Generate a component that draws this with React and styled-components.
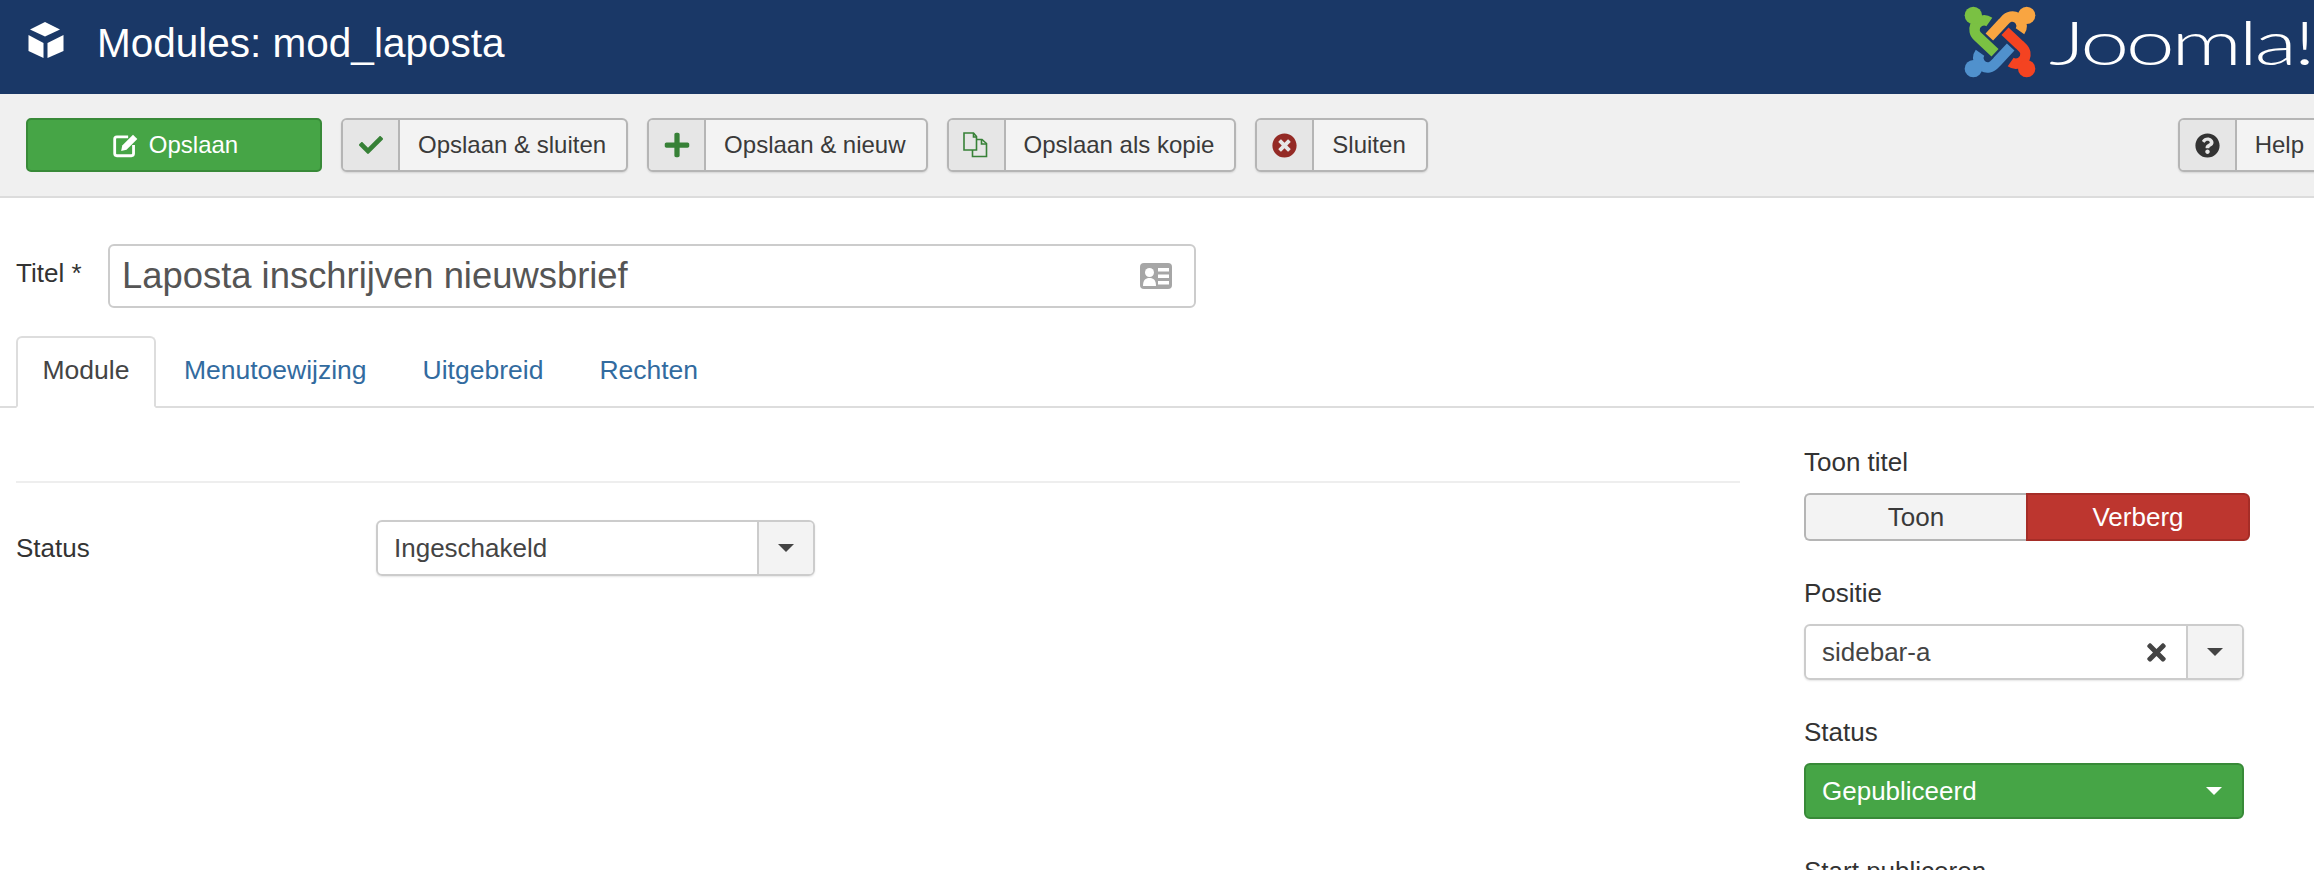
import React from 'react'
import styled, { createGlobalStyle } from 'styled-components'
import { FaCheck, FaPlus, FaTimesCircle, FaQuestionCircle, FaTimes } from 'react-icons/fa'

const App = () => (
    <Frame>
        <GlobalStyle />
        <Page>
            <Header>
                <CubeIcon />
                <HeaderTitle>Modules: mod_laposta</HeaderTitle>
                <JoomlaLogo />
            </Header>
            <Toolbar>
                <SaveButton><EditIcon />Opslaan</SaveButton>
                <ToolButton icon={<FaCheck />} color="#378137" size={24}>Opslaan &amp; sluiten</ToolButton>
                <ToolButton icon={<FaPlus />} color="#378137" size={28}>Opslaan &amp; nieuw</ToolButton>
                <ToolButton icon={<CopyIcon />}>Opslaan als kopie</ToolButton>
                <ToolButton icon={<FaTimesCircle />} color="#942a25" size={25}>Sluiten</ToolButton>
                <ToolButton right icon={<FaQuestionCircle />} color="#333" size={25}>Help</ToolButton>
            </Toolbar>
            <Content>
                <TitleRow>
                    <TitleLabel>Titel *</TitleLabel>
                    <TitleField>
                        Laposta inschrijven nieuwsbrief
                        <CardIcon />
                    </TitleField>
                </TitleRow>
                <Tabs>
                    <Tab active>Module</Tab>
                    <Tab>Menutoewijzing</Tab>
                    <Tab>Uitgebreid</Tab>
                    <Tab>Rechten</Tab>
                </Tabs>
                <Columns>
                    <MainColumn>
                        <Rule />
                        <StatusRow>
                            <StatusLabel>Status</StatusLabel>
                            <Select width={439}>
                                <SelectValue>Ingeschakeld</SelectValue>
                                <SelectArrow><Caret /></SelectArrow>
                            </Select>
                        </StatusRow>
                    </MainColumn>
                    <Sidebar>
                        <Field>
                            <FieldLabel>Toon titel</FieldLabel>
                            <Toggle>
                                <ToggleOption>Toon</ToggleOption>
                                <ToggleOption selected>Verberg</ToggleOption>
                            </Toggle>
                        </Field>
                        <Field>
                            <FieldLabel>Positie</FieldLabel>
                            <Select width={440}>
                                <SelectValue>sidebar-a</SelectValue>
                                <ClearIcon><FaTimes /></ClearIcon>
                                <SelectArrow><Caret /></SelectArrow>
                            </Select>
                        </Field>
                        <Field>
                            <FieldLabel>Status</FieldLabel>
                            <GreenSelect>
                                Gepubliceerd
                                <Caret light />
                            </GreenSelect>
                        </Field>
                        <Field>
                            <FieldLabel>Start publiceren</FieldLabel>
                        </Field>
                    </Sidebar>
                </Columns>
            </Content>
        </Page>
    </Frame>
)

export default App

const ToolButton = ({ icon, color, size, right, children }) => (
    <Button right={right}>
        <ButtonIcon color={color} size={size}>{icon}</ButtonIcon>
        <ButtonText>{children}</ButtonText>
    </Button>
)

const CubeIcon = () => (
    <CubeSvg viewBox="0 0 60 70">
        <polygon fill="#fff" points="30,11 45,18.5 30,25.5 15,18.5" />
        <polygon fill="#fff" points="13.5,24 28.5,32 28.5,47 13.5,40" />
        <polygon fill="#fff" points="32.5,32 48.5,24 48.5,40 32.5,47" />
    </CubeSvg>
)

const EditIcon = () => (
    <EditSvg viewBox="0 0 26 24">
        <path d="M15 4.5H4.5a2 2 0 0 0-2 2V20a2 2 0 0 0 2 2H18a2 2 0 0 0 2-2v-8" fill="none" stroke="#fff" strokeWidth="2.6" />
        <path d="M8.5 17.5l1-5L19.5 2.5l4 4-10 10z" fill="#fff" />
    </EditSvg>
)

const CopyIcon = () => (
    <svg width="26" height="26" viewBox="0 0 26 26" fill="none" stroke="#378137" strokeWidth="1.6">
        <path d="M1 1h9.5l3 3.500V18H1z" />
        <path d="M10.500 1v4h3" />
        <path d="M14 7.500h5l4.500 4V24.500H9.500V18" />
        <path d="M18.500 7.500v4.500h5" />
    </svg>
)

const CardIcon = () => (
    <CardSvg viewBox="0 0 32 26">
        <rect width="32" height="26" rx="4" fill="#a6a6a6" />
        <circle cx="9.500" cy="9.500" r="4.500" fill="#fff" />
        <path d="M3 23c0-6 2.500-8 6.500-8s6.500 2 6.500 8z" fill="#fff" />
        <rect x="18" y="5" width="11" height="3.500" fill="#fff" />
        <rect x="18" y="11.500" width="11" height="3.500" fill="#fff" />
        <rect x="18" y="18" width="11" height="3.500" fill="#fff" />
    </CardSvg>
)

const logoPiece = 'M-32 -60 C-52 -74 -80 -56 -76 -32 C-74 -20 -66 -16 -58 -8 L-15 32'
const logoColors = [
    ['#f9a541', 90],
    ['#7ac143', 0],
    ['#5091cd', 270],
    ['#f44321', 180],
]

const JoomlaLogo = () => (
    <LogoWrap>
        <svg width="80" height="76" viewBox="-120 -114 240 228">
            {logoColors.map(([color, angle]) => (
                <g key={color} transform={`rotate(${angle})`}>
                    <path d={logoPiece} fill="none" stroke="#1a3867" strokeWidth="37" />
                    <path d={logoPiece} fill="none" stroke={color} strokeWidth="31" />
                    <circle cx="-80" cy="-80" r="26" fill={color} />
                </g>
            ))}
        </svg>
        <LogoWordSvg width="264" height="76" viewBox="0 0 264 76">
            <text transform="translate(0 61) scale(1.42 1)" fontFamily="Lato, 'Liberation Sans', sans-serif" fontWeight="300" fontSize="62" letterSpacing="-2.5" fill="#fff">Joomla!</text>
        </LogoWordSvg>
    </LogoWrap>
)

const GlobalStyle = createGlobalStyle`
    body {
        margin: 0;
        background: #fff;
        color: #333;
        font-family: "Liberation Sans", Arial, sans-serif;
    }
`

const Frame = styled.div`
    width: 2314px;
    height: 870px;
    overflow: hidden;
`

const Page = styled.div`
    width: 2352px;
`

const Header = styled.header`
    height: 94px;
    background: #1a3867;
    display: flex;
    align-items: center;
    padding-left: 25px;
    padding-right: 38px;
    box-sizing: border-box;
`

const CubeSvg = styled.svg`
    width: 60px;
    height: 70px;
    margin-left: -10px;
    margin-top: 11px;
    margin-right: 22px;
    align-self: flex-start;
`

const HeaderTitle = styled.h1`
    margin: -8px 0 0;
    color: #fff;
    font-size: 40.5px;
    font-weight: 400;
`

const LogoWrap = styled.div`
    margin-left: auto;
    display: flex;
    align-items: flex-start;
    gap: 6px;
    align-self: flex-start;
    padding-top: 4px;
    transform: translateX(-1px);
`

const LogoWordSvg = styled.svg`
    margin-left: 3px;
`

const Toolbar = styled.div`
    height: 104px;
    box-sizing: border-box;
    background: #f0f0f0;
    border-bottom: 2px solid #dcdcdc;
    padding: 24px 26px;
    display: flex;
    gap: 19px;
`

const SaveButton = styled.div`
    width: 296px;
    height: 54px;
    box-sizing: border-box;
    background: #46a546;
    border: 2px solid #388a38;
    border-radius: 5px;
    color: #fff;
    font-size: 24px;
    padding-left: 2px;
    display: flex;
    align-items: center;
    justify-content: center;
    gap: 9px;
`

const EditSvg = styled.svg`
    width: 28px;
    height: 26px;
`

const Button = styled.div`
    height: 54px;
    box-sizing: border-box;
    background: #f3f3f3;
    border: 2px solid #b5b5b5;
    border-radius: 6px;
    box-shadow: 0 1px 2px rgba(0, 0, 0, 0.12);
    display: flex;
    font-size: 24px;
    color: #3a3a3a;
    ${p => p.right && 'margin-left: auto;'}
`

const ButtonIcon = styled.span`
    width: 55px;
    display: flex;
    align-items: center;
    justify-content: center;
    background: #e6e6e6;
    border-right: 2px solid #b5b5b5;
    border-radius: 4px 0 0 4px;
    color: ${p => p.color || '#333'};
    font-size: ${p => p.size || 24}px;
`

const ButtonText = styled.span`
    padding: 0 20px 0 18px;
    display: flex;
    align-items: center;
`

const Content = styled.div`
    padding: 46px 0 0 16px;
`

const TitleRow = styled.div`
    display: flex;
    align-items: center;
`

const TitleLabel = styled.label`
    width: 92px;
    font-size: 26px;
    margin-top: -6px;
`

const TitleField = styled.div`
    width: 1088px;
    height: 64px;
    box-sizing: border-box;
    border: 2px solid #ccc;
    border-radius: 6px;
    padding: 0 22px 0 12px;
    display: flex;
    align-items: center;
    justify-content: space-between;
    font-size: 36.4px;
    color: #555;
`

const CardSvg = styled.svg`
    width: 32px;
    height: 26px;
`

const Tabs = styled.div`
    margin-top: 28px;
    margin-left: -16px;
    padding-left: 16px;
    height: 70px;
    border-bottom: 2px solid #ddd;
    display: flex;
`

const Tab = styled.div`
    height: 72px;
    box-sizing: border-box;
    padding: 0 ${p => (p.active ? 24.5 : 26)}px 4px;
    display: flex;
    align-items: center;
    font-size: 26.5px;
    color: ${p => (p.active ? '#444' : '#326b9f')};
    background: ${p => (p.active ? '#fff' : 'transparent')};
    border: 2px solid ${p => (p.active ? '#ddd' : 'transparent')};
    border-bottom-color: ${p => (p.active ? '#fff' : 'transparent')};
    border-radius: 6px 6px 0 0;
`

const Columns = styled.div`
    display: flex;
    gap: 64px;
`

const MainColumn = styled.div`
    width: 1724px;
`

const Rule = styled.hr`
    margin: 73px 0 0;
    border: 0;
    border-top: 2px solid #eee;
`

const StatusRow = styled.div`
    margin-top: 37px;
    display: flex;
    align-items: center;
`

const StatusLabel = styled.label`
    width: 360px;
    font-size: 26px;
`

const Select = styled.div`
    width: ${p => p.width}px;
    height: 56px;
    box-sizing: border-box;
    border: 2px solid #ccc;
    border-radius: 6px;
    box-shadow: 0 1px 2px rgba(0, 0, 0, 0.1);
    display: flex;
    align-items: stretch;
    font-size: 26px;
    color: #444;
`

const SelectValue = styled.span`
    flex: 1;
    padding-left: 16px;
    display: flex;
    align-items: center;
`

const ClearIcon = styled.span`
    display: flex;
    align-items: center;
    font-size: 27px;
    color: #444;
    padding-right: 16px;
`

const SelectArrow = styled.span`
    width: 54px;
    background: #f3f3f3;
    border-left: 2px solid #ccc;
    border-radius: 0 4px 4px 0;
    display: flex;
    align-items: center;
    justify-content: center;
`

const Caret = styled.i`
    width: 0;
    height: 0;
    border-left: 8px solid transparent;
    border-right: 8px solid transparent;
    border-top: 8px solid ${p => (p.light ? '#fff' : '#444')};
`

const Sidebar = styled.aside`
    width: 446px;
    padding-top: 38px;
    display: flex;
    flex-direction: column;
    gap: 36px;
`

const Field = styled.div`
    display: flex;
    flex-direction: column;
    gap: 15px;
`

const FieldLabel = styled.label`
    font-size: 26px;
    line-height: 32px;
`

const Toggle = styled.div`
    display: flex;
    height: 48px;
`

const ToggleOption = styled.div`
    flex: 1;
    box-sizing: border-box;
    display: flex;
    align-items: center;
    justify-content: center;
    font-size: 26px;
    color: ${p => (p.selected ? '#fff' : '#3a3a3a')};
    background: ${p => (p.selected ? '#bd362f' : '#f3f3f3')};
    border: 2px solid ${p => (p.selected ? '#a52d27' : '#b5b5b5')};
    border-width: ${p => (p.selected ? '2px' : '2px 0 2px 2px')};
    border-radius: ${p => (p.selected ? '0 6px 6px 0' : '6px 0 0 6px')};
`

const GreenSelect = styled.div`
    width: 440px;
    height: 56px;
    box-sizing: border-box;
    background: #46a546;
    border: 2px solid #388a38;
    border-radius: 6px;
    color: #fff;
    font-size: 26px;
    padding: 0 20px 0 16px;
    display: flex;
    align-items: center;
    justify-content: space-between;
`
